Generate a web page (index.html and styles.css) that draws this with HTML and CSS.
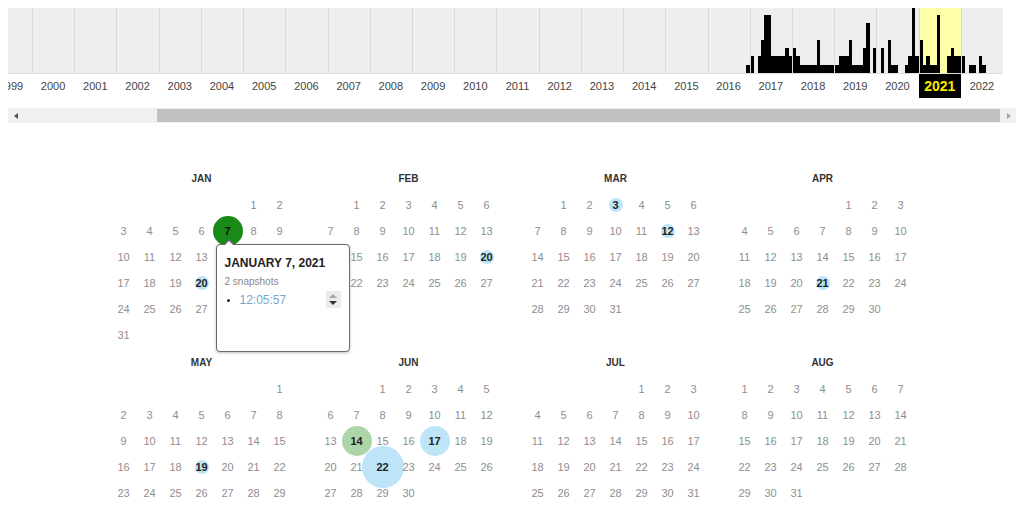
FILE: index.html
```html
<!DOCTYPE html>
<html lang="en">
<head>
<meta charset="utf-8">
<title>Wayback calendar 2021</title>
<link rel="stylesheet" href="styles.css">
</head>
<body>
<div class="timeline">
  <div class="hist">
    <div class="yc"></div><div class="yc"></div><div class="yc"></div><div class="yc"></div>
    <div class="yc"></div><div class="yc"></div><div class="yc"></div><div class="yc"></div>
    <div class="yc"></div><div class="yc"></div><div class="yc"></div><div class="yc"></div>
    <div class="yc"></div><div class="yc"></div><div class="yc"></div><div class="yc"></div>
    <div class="yc"></div>
    <div class="yc"><i></i><i></i><i></i><i></i><i></i><i></i><i></i><i></i><i></i><i></i><i></i><i style="height:8px"></i></div>
    <div class="yc"><i style="height:17px"></i><i></i><i style="height:17px"></i><i style="height:33px"></i><i style="height:58px"></i><i style="height:58px"></i><i style="height:17px"></i><i style="height:17px"></i><i style="height:17px"></i><i style="height:17px"></i><i style="height:25px"></i><i style="height:17px"></i></div>
    <div class="yc"><i style="height:25px"></i><i style="height:17px"></i><i style="height:8px"></i><i style="height:8px"></i><i style="height:8px"></i><i style="height:8px"></i><i style="height:8px"></i><i style="height:33px"></i><i style="height:8px"></i><i style="height:8px"></i><i style="height:8px"></i><i style="height:8px"></i></div>
    <div class="yc"><i style="height:8px"></i><i style="height:17px"></i><i style="height:17px"></i><i style="height:17px"></i><i style="height:33px"></i><i style="height:8px"></i><i style="height:8px"></i><i style="height:8px"></i><i style="height:25px"></i><i style="height:50px"></i><i></i><i style="height:25px"></i></div>
    <div class="yc"><i></i><i style="height:25px"></i><i></i><i style="height:33px"></i><i style="height:8px"></i><i style="height:8px"></i><i></i><i></i><i style="height:8px"></i><i style="height:17px"></i><i style="height:65px"></i><i style="height:17px"></i></div>
    <div class="yc cur"><i style="height:33px"></i><i style="height:8px"></i><i style="height:17px"></i><i style="height:8px"></i><i style="height:8px"></i><i style="height:58px"></i><i></i><i></i><i style="height:17px"></i><i style="height:25px"></i><i style="height:17px"></i><i style="height:17px"></i></div>
    <div class="yc"><i style="height:17px"></i><i></i><i style="height:8px"></i><i style="height:8px"></i><i></i><i style="height:17px"></i><i style="height:8px"></i><i></i><i></i><i></i><i></i><i></i></div>
  </div>
  <div class="labels">
    <span class="lbl">1999</span><span class="lbl">2000</span><span class="lbl">2001</span><span class="lbl">2002</span>
    <span class="lbl">2003</span><span class="lbl">2004</span><span class="lbl">2005</span><span class="lbl">2006</span>
    <span class="lbl">2007</span><span class="lbl">2008</span><span class="lbl">2009</span><span class="lbl">2010</span>
    <span class="lbl">2011</span><span class="lbl">2012</span><span class="lbl">2013</span><span class="lbl">2014</span>
    <span class="lbl">2015</span><span class="lbl">2016</span><span class="lbl">2017</span><span class="lbl">2018</span>
    <span class="lbl">2019</span><span class="lbl">2020</span><span class="lbl cur">2021</span><span class="lbl">2022</span>
  </div>
</div>

<div class="scrollbar">
  <span class="sb-btn sb-left"></span>
  <span class="sb-gap"></span>
  <span class="sb-thumb"></span>
  <span class="sb-rest"></span>
  <span class="sb-btn sb-right"></span>
</div>

<div class="calendar">
  <div class="month">
    <div class="month-name">JAN</div>
    <div class="days">
      <span class="d start-6">1</span><span class="d">2</span>
      <span class="d">3</span><span class="d">4</span><span class="d">5</span><span class="d">6</span>
      <span class="d hit dark md">7
        <span class="popup">
          <span class="popup-title">JANUARY 7, 2021</span>
          <span class="popup-count">2 snapshots</span>
          <ul class="popup-list"><li>12:05:57</li></ul>
          <span class="spinner"><span class="sp-up"></span><span class="sp-down"></span></span>
        </span>
      </span>
      <span class="d">8</span><span class="d">9</span>
      <span class="d">10</span><span class="d">11</span><span class="d">12</span><span class="d">13</span><span class="d">14</span><span class="d">15</span><span class="d">16</span>
      <span class="d">17</span><span class="d">18</span><span class="d">19</span><span class="d hit blue sm">20</span><span class="d">21</span><span class="d">22</span><span class="d">23</span>
      <span class="d">24</span><span class="d">25</span><span class="d">26</span><span class="d">27</span><span class="d">28</span><span class="d">29</span><span class="d">30</span>
      <span class="d">31</span>
    </div>
  </div>
  <div class="month">
    <div class="month-name">FEB</div>
    <div class="days">
      <span class="d start-2">1</span><span class="d">2</span><span class="d">3</span><span class="d">4</span><span class="d">5</span><span class="d">6</span>
      <span class="d">7</span><span class="d">8</span><span class="d">9</span><span class="d">10</span><span class="d">11</span><span class="d">12</span><span class="d">13</span>
      <span class="d">14</span><span class="d">15</span><span class="d">16</span><span class="d">17</span><span class="d">18</span><span class="d">19</span><span class="d hit blue sm">20</span>
      <span class="d">21</span><span class="d">22</span><span class="d">23</span><span class="d">24</span><span class="d">25</span><span class="d">26</span><span class="d">27</span>
      <span class="d">28</span>
    </div>
  </div>
  <div class="month">
    <div class="month-name">MAR</div>
    <div class="days">
      <span class="d start-2">1</span><span class="d">2</span><span class="d hit blue sm">3</span><span class="d">4</span><span class="d">5</span><span class="d">6</span>
      <span class="d">7</span><span class="d">8</span><span class="d">9</span><span class="d">10</span><span class="d">11</span><span class="d hit blue sm">12</span><span class="d">13</span>
      <span class="d">14</span><span class="d">15</span><span class="d">16</span><span class="d">17</span><span class="d">18</span><span class="d">19</span><span class="d">20</span>
      <span class="d">21</span><span class="d">22</span><span class="d">23</span><span class="d">24</span><span class="d">25</span><span class="d">26</span><span class="d">27</span>
      <span class="d">28</span><span class="d">29</span><span class="d">30</span><span class="d">31</span>
    </div>
  </div>
  <div class="month">
    <div class="month-name">APR</div>
    <div class="days">
      <span class="d start-5">1</span><span class="d">2</span><span class="d">3</span>
      <span class="d">4</span><span class="d">5</span><span class="d">6</span><span class="d">7</span><span class="d">8</span><span class="d">9</span><span class="d">10</span>
      <span class="d">11</span><span class="d">12</span><span class="d">13</span><span class="d">14</span><span class="d">15</span><span class="d">16</span><span class="d">17</span>
      <span class="d">18</span><span class="d">19</span><span class="d">20</span><span class="d hit blue sm">21</span><span class="d">22</span><span class="d">23</span><span class="d">24</span>
      <span class="d">25</span><span class="d">26</span><span class="d">27</span><span class="d">28</span><span class="d">29</span><span class="d">30</span>
    </div>
  </div>
  <div class="month">
    <div class="month-name">MAY</div>
    <div class="days">
      <span class="d start-7">1</span>
      <span class="d">2</span><span class="d">3</span><span class="d">4</span><span class="d">5</span><span class="d">6</span><span class="d">7</span><span class="d">8</span>
      <span class="d">9</span><span class="d">10</span><span class="d">11</span><span class="d">12</span><span class="d">13</span><span class="d">14</span><span class="d">15</span>
      <span class="d">16</span><span class="d">17</span><span class="d">18</span><span class="d hit blue sm">19</span><span class="d">20</span><span class="d">21</span><span class="d">22</span>
      <span class="d">23</span><span class="d">24</span><span class="d">25</span><span class="d">26</span><span class="d">27</span><span class="d">28</span><span class="d">29</span>
      <span class="d">30</span><span class="d">31</span>
    </div>
  </div>
  <div class="month">
    <div class="month-name">JUN</div>
    <div class="days">
      <span class="d start-3">1</span><span class="d">2</span><span class="d">3</span><span class="d">4</span><span class="d">5</span>
      <span class="d">6</span><span class="d">7</span><span class="d">8</span><span class="d">9</span><span class="d">10</span><span class="d">11</span><span class="d">12</span>
      <span class="d">13</span><span class="d hit green md">14</span><span class="d">15</span><span class="d">16</span><span class="d hit blue md">17</span><span class="d">18</span><span class="d">19</span>
      <span class="d">20</span><span class="d">21</span><span class="d hit blue lg">22</span><span class="d">23</span><span class="d">24</span><span class="d">25</span><span class="d">26</span>
      <span class="d">27</span><span class="d">28</span><span class="d">29</span><span class="d">30</span>
    </div>
  </div>
  <div class="month">
    <div class="month-name">JUL</div>
    <div class="days">
      <span class="d start-5">1</span><span class="d">2</span><span class="d">3</span>
      <span class="d">4</span><span class="d">5</span><span class="d">6</span><span class="d">7</span><span class="d">8</span><span class="d">9</span><span class="d">10</span>
      <span class="d">11</span><span class="d">12</span><span class="d">13</span><span class="d">14</span><span class="d">15</span><span class="d">16</span><span class="d">17</span>
      <span class="d">18</span><span class="d">19</span><span class="d">20</span><span class="d">21</span><span class="d">22</span><span class="d">23</span><span class="d">24</span>
      <span class="d">25</span><span class="d">26</span><span class="d">27</span><span class="d">28</span><span class="d">29</span><span class="d">30</span><span class="d">31</span>
    </div>
  </div>
  <div class="month">
    <div class="month-name">AUG</div>
    <div class="days">
      <span class="d">1</span><span class="d">2</span><span class="d">3</span><span class="d">4</span><span class="d">5</span><span class="d">6</span><span class="d">7</span>
      <span class="d">8</span><span class="d">9</span><span class="d">10</span><span class="d">11</span><span class="d">12</span><span class="d">13</span><span class="d">14</span>
      <span class="d">15</span><span class="d">16</span><span class="d">17</span><span class="d">18</span><span class="d">19</span><span class="d">20</span><span class="d">21</span>
      <span class="d">22</span><span class="d">23</span><span class="d">24</span><span class="d">25</span><span class="d">26</span><span class="d">27</span><span class="d">28</span>
      <span class="d">29</span><span class="d">30</span><span class="d">31</span>
    </div>
  </div>
</div>
</body>
</html>
```

FILE: styles.css
```css
html {
  overflow: hidden;
}

body {
  margin: 8px;
  background: #fff;
  font-family: "Liberation Sans", Arial, sans-serif;
}

/* ---------- timeline histogram ---------- */
.timeline {
  width: 995px;
  overflow: hidden;
}

.hist {
  display: flex;
  height: 65px;
  margin-left: -18.23px;
  background: #eeeeee;
  border-bottom: 1px solid #dedede;
}

.yc {
  flex: 0 0 42.23px;
  box-sizing: border-box;
  border-left: 1px solid #d9d9d9;
  display: flex;
  align-items: flex-end;
}

.yc.cur {
  background: #ffffaa;
}

.yc i {
  flex: 1 1 0;
  background: #000;
}

.labels {
  display: flex;
  margin-left: -18.23px;
  height: 24px;
}

.lbl {
  flex: 0 0 42.23px;
  text-align: center;
  font-size: 11px;
  line-height: 24px;
  color: #444;
}

.lbl.cur {
  background: #000;
  color: #ffe800;
  font-weight: bold;
  font-size: 14px;
}

/* ---------- fake horizontal scrollbar ---------- */
.scrollbar {
  margin-top: 10px;
  width: 1008px;
  height: 15px;
  background: #f1f1f1;
  display: flex;
  align-items: center;
}

.sb-btn {
  flex: 0 0 15px;
  height: 15px;
  display: flex;
  align-items: center;
  justify-content: center;
}

.sb-left::before {
  content: "";
  border-style: solid;
  border-width: 3.5px 4px 3.5px 0;
  border-color: transparent #505050 transparent transparent;
}

.sb-right::before {
  content: "";
  border-style: solid;
  border-width: 3.5px 0 3.5px 4px;
  border-color: transparent transparent transparent #a3a3a3;
}

.sb-gap {
  flex: 0 0 134px;
}

.sb-thumb {
  flex: 0 0 843px;
  height: 13px;
  background: #c1c1c1;
}

.sb-rest {
  flex: 1 1 auto;
}

/* ---------- calendar ---------- */
.calendar {
  width: 803px;
  margin: 43px auto 0;
  display: grid;
  grid-template-columns: repeat(4, 182px);
  column-gap: 25px;
  row-gap: 2px;
  align-items: start;
}

.month-name {
  height: 26px;
  line-height: 26px;
  text-align: center;
  font-size: 10px;
  font-weight: bold;
  color: #333;
}

.days {
  display: grid;
  grid-template-columns: repeat(7, 26px);
  grid-auto-rows: 26px;
  font-size: 11px;
  color: #8e8e8e;
}

.d {
  position: relative;
  display: flex;
  align-items: center;
  justify-content: center;
}

.start-2 { grid-column-start: 2; }
.start-3 { grid-column-start: 3; }
.start-5 { grid-column-start: 5; }
.start-6 { grid-column-start: 6; }
.start-7 { grid-column-start: 7; }

.hit {
  font-weight: bold;
  color: #222;
}

.hit::before {
  content: "";
  position: absolute;
  left: 50%;
  top: 50%;
  border-radius: 50%;
  transform: translate(-50%, -50%);
  z-index: -1;
}

.hit.sm::before { width: 14px; height: 14px; }
.hit.md::before { width: 30px; height: 30px; }
.hit.lg::before { width: 42px; height: 42px; }

.hit.blue::before { background: #bde4f7; }
.hit.green::before { background: #acd5aa; }
.hit.dark::before { background: #178a17; }
.hit.dark { color: #111; }

/* ---------- popup ---------- */
.popup {
  position: absolute;
  left: 1px;
  top: 26px;
  z-index: 10;
  box-sizing: border-box;
  width: 134px;
  height: 108px;
  padding: 11px 8px 0;
  background: #fff;
  border: 1px solid #6a6a6a;
  border-radius: 4px;
  box-shadow: 0 1px 3px rgba(0, 0, 0, 0.25);
  display: flex;
  flex-direction: column;
  align-items: flex-start;
  text-align: left;
  font-weight: normal;
}

.popup::before {
  content: "";
  position: absolute;
  left: 6px;
  top: -6px;
  border-style: solid;
  border-width: 0 6px 6px 6px;
  border-color: transparent transparent #6a6a6a transparent;
}

.popup::after {
  content: "";
  position: absolute;
  left: 7px;
  top: -4px;
  border-style: solid;
  border-width: 0 5px 5px 5px;
  border-color: transparent transparent #fff transparent;
}

.popup-title {
  font-size: 12px;
  line-height: 15px;
  font-weight: bold;
  color: #222;
  white-space: nowrap;
}

.popup-count {
  margin-top: 4px;
  font-size: 10px;
  line-height: 13px;
  color: #888;
}

.popup-list {
  margin: 4px 0 0;
  padding-left: 15px;
  font-size: 12px;
  line-height: 16px;
  color: #222;
}

.popup-list li {
  color: #7ba6cd;
}

.popup-list li::marker {
  color: #222;
  font-size: 10px;
}

.spinner {
  position: absolute;
  right: 8px;
  top: 46px;
  width: 15px;
  height: 17px;
  background: #ececec;
  display: flex;
  flex-direction: column;
  align-items: center;
  justify-content: center;
  gap: 3px;
}

.sp-up {
  border-style: solid;
  border-width: 0 4px 4px 4px;
  border-color: transparent transparent #a8a8a8 transparent;
}

.sp-down {
  border-style: solid;
  border-width: 4px 4px 0 4px;
  border-color: #333 transparent transparent transparent;
}
```
